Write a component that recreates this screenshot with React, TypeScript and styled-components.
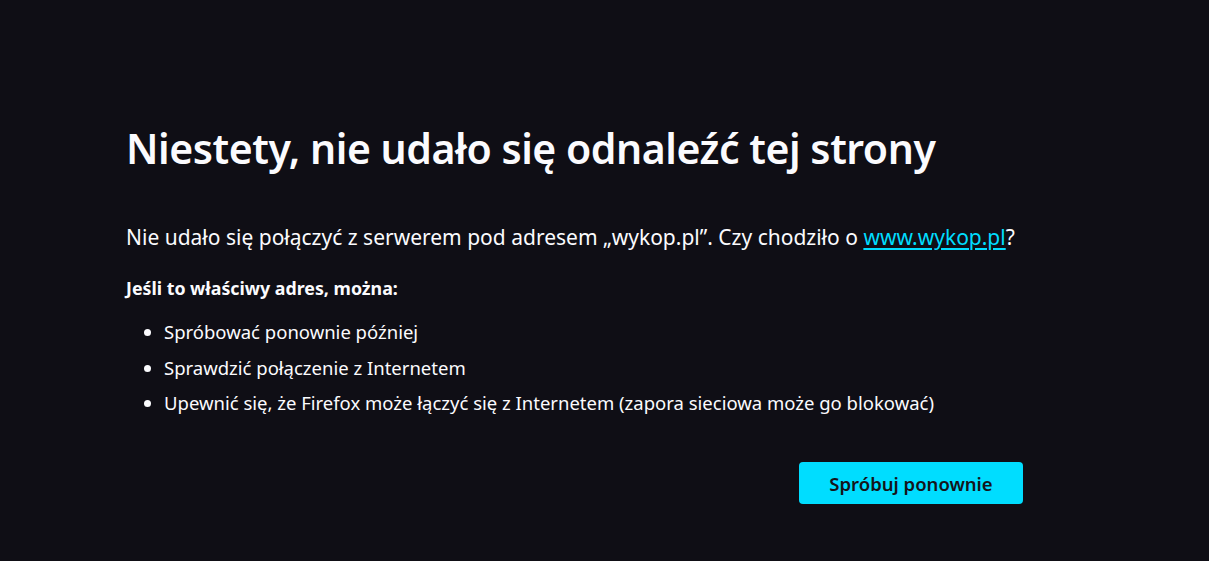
import styled, { createGlobalStyle } from 'styled-components';

const GlobalStyle = createGlobalStyle`
  html, body {
    margin: 0;
    padding: 0;
    background: #0f0e15;
  }
  body {
    font-family: 'Noto Sans', 'Open Sans', sans-serif;
    color: #fbfbfe;
  }
`;

const Page = styled.main`
  min-height: 561px;
  box-sizing: border-box;
  padding: 118px 0 0 126px;
`;

const Container = styled.div`
  width: 897px;
  display: flex;
  flex-direction: column;
`;

const Title = styled.h1`
  margin: 0;
  font-size: 41px;
  font-weight: 600;
  line-height: 60px;
  letter-spacing: -0.45px;
  white-space: nowrap;
`;

const ShortDesc = styled.p`
  margin: 44px 0 0;
  font-size: 21px;
  line-height: 30px;
  white-space: nowrap;
`;

const Link = styled.a`
  color: #00ddff;
  text-decoration: underline;
  text-underline-offset: 3px;
`;

const Lead = styled.p`
  margin: 23px 0 0;
  font-size: 17.8px;
  font-weight: 700;
  line-height: 26px;
`;

const List = styled.ul`
  margin: 18px 0 0;
  padding: 0 0 0 38px;
  display: flex;
  flex-direction: column;
  gap: 9.5px;
  font-size: 18.5px;
  line-height: 26px;
`;

const Item = styled.li`
  white-space: nowrap;
`;

const Actions = styled.div`
  display: flex;
  justify-content: flex-end;
  margin-top: 46px;
`;

const RetryButton = styled.button`
  width: 224px;
  height: 42px;
  border: none;
  border-radius: 4px;
  background: #00ddff;
  color: #15141a;
  font-family: inherit;
  font-size: 18.5px;
  font-weight: 600;
  cursor: pointer;
`;

export default function App() {
  return (
    <>
      <GlobalStyle />
      <Page>
        <Container>
          <Title>Niestety, nie udało się odnaleźć tej strony</Title>
          <ShortDesc>
            Nie udało się połączyć z serwerem pod adresem „wykop.pl”. Czy chodziło o{' '}
            <Link href="#">www.wykop.pl</Link>?
          </ShortDesc>
          <Lead>Jeśli to właściwy adres, można:</Lead>
          <List>
            <Item>Spróbować ponownie później</Item>
            <Item>Sprawdzić połączenie z Internetem</Item>
            <Item>Upewnić się, że Firefox może łączyć się z Internetem (zapora sieciowa może go blokować)</Item>
          </List>
          <Actions>
            <RetryButton>Spróbuj ponownie</RetryButton>
          </Actions>
        </Container>
      </Page>
    </>
  );
}
